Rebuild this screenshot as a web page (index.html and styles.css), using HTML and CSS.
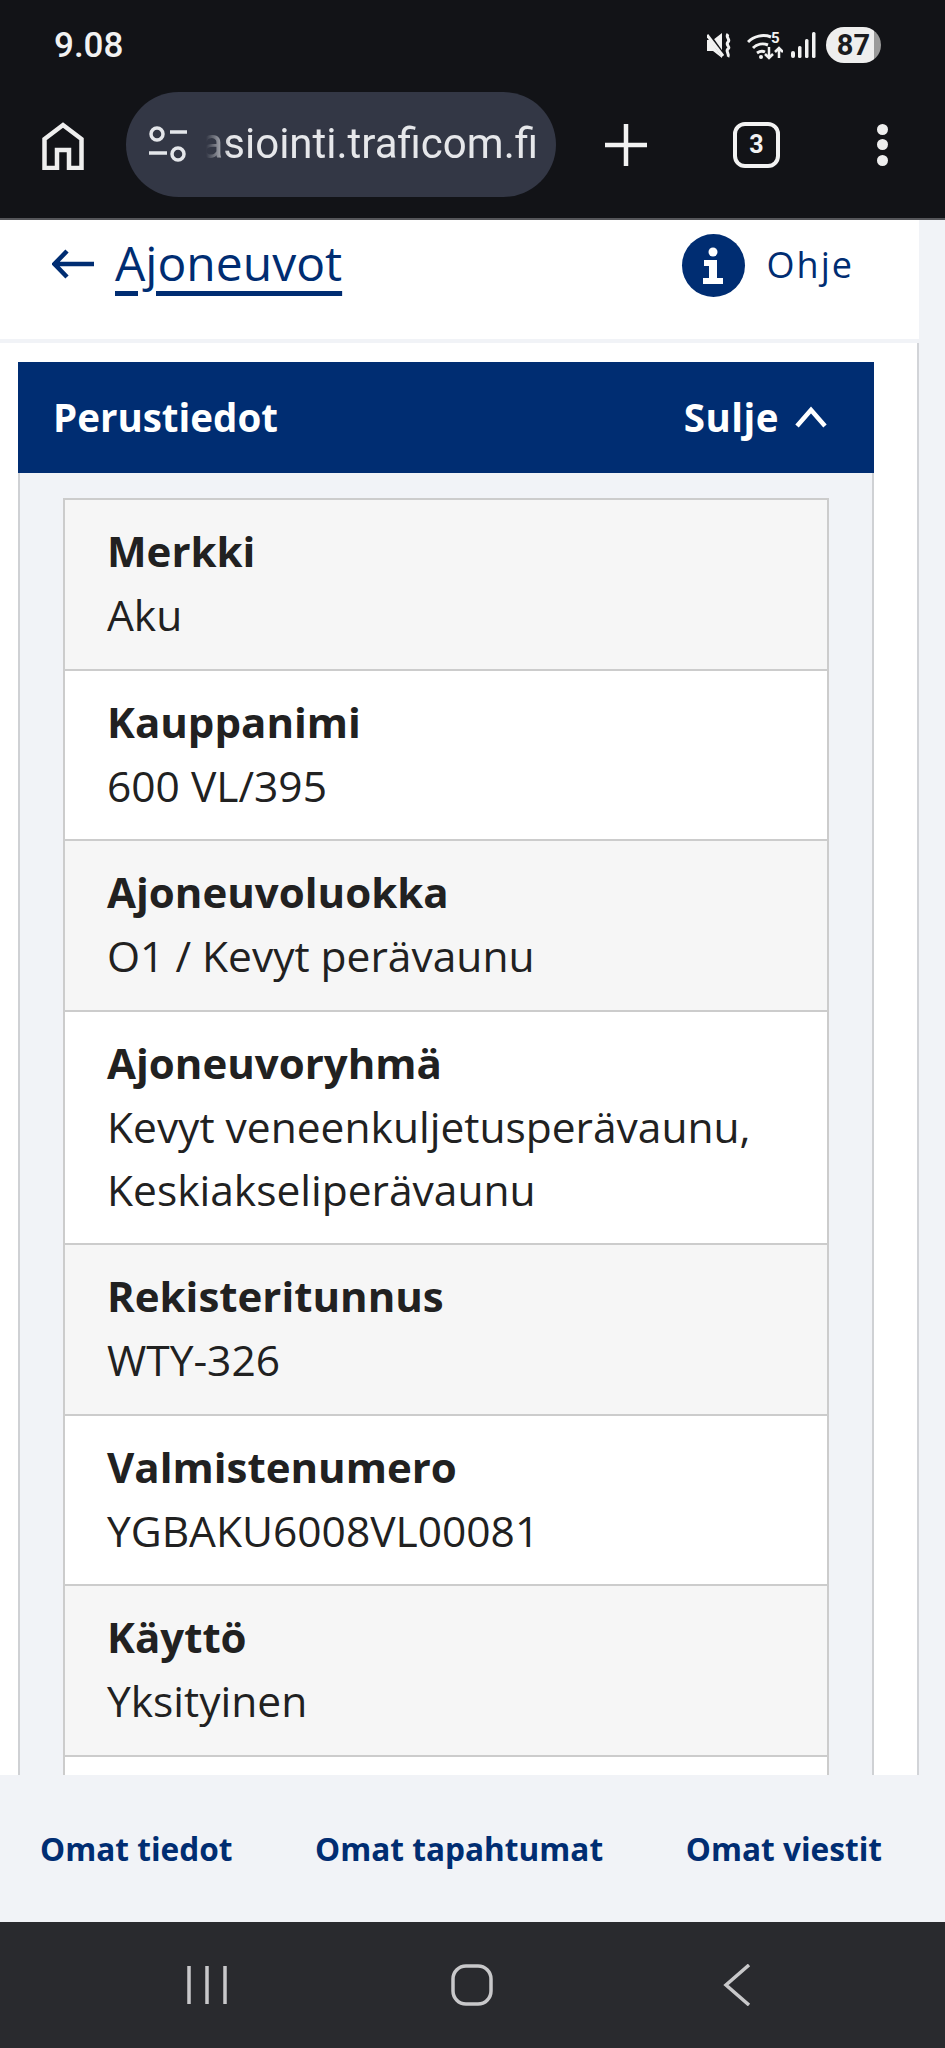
FILE: index.html
```html
<!DOCTYPE html>
<html lang="fi">
<head>
    <meta charset="UTF-8">
    <title>Ajoneuvot</title>
    <link rel="stylesheet" href="styles.css">
</head>
<body>
<div class="phone">
    <div class="chrome">
        <div class="status">
            <span class="clock">9.08</span>
            <div class="status-icons">
                <svg class="ic-mute" viewBox="0 0 26 25" width="26" height="25" fill="none">
                    <path d="M0 7h6L15 0V25L6 18H0z" fill="#f2f2f2"/>
                    <path d="M1 1l15 21" stroke="#121317" stroke-width="4"/>
                    <path d="M0 2l16 21" stroke="#f2f2f2" stroke-width="3"/>
                    <path d="M21 1c-3 4 3 5 0 8s3 5 0 7 2 5 0 8" stroke="#f2f2f2" stroke-width="3"/>
                </svg>
                <svg class="ic-wifi" viewBox="0 0 36 30" width="36" height="30" fill="none" stroke="#f2f2f2" stroke-width="3">
                    <path d="M1 12c6-6 15-8 23-5M6 18c4-4 10-5 15-3M10 23c3-2 6-2 8-1"/>
                    <circle cx="14" cy="27" r="2" fill="#f2f2f2" stroke="none"/>
                    <path d="M22 17v11M18 24l4 4 4-4M32 28V18M28 22l4-4 4 4" stroke-width="2.500"/>
                </svg>
                <span class="wifi-five">5</span>
                <svg class="ic-signal" viewBox="0 0 25 26" width="25" height="26" fill="#f2f2f2">
                    <rect x="0" y="19" width="4" height="7" rx="2"/>
                    <rect x="7" y="14" width="3.500" height="12" rx="1.500"/>
                    <rect x="14" y="7" width="3.500" height="19" rx="1.500"/>
                    <rect x="21" y="0" width="3.500" height="26" rx="1.500"/>
                </svg>
                <span class="battery">87</span>
            </div>
        </div>
        <div class="toolbar">
            <svg class="ic-home" viewBox="0 0 42 48" width="42" height="48" fill="none" stroke="#eeeeee" stroke-width="4.500">
                <path d="M2.500 46V17L21 3l18.500 14v29H27V28H15v18z"/>
            </svg>
            <div class="url-pill">
                <svg class="ic-tune" viewBox="0 0 40 36" width="40" height="36" fill="none" stroke="#e4e6ea" stroke-width="3.500">
                    <circle cx="9" cy="8" r="6"/>
                    <path d="M22 6h17M1 27h18"/>
                    <circle cx="30" cy="28" r="6"/>
                </svg>
                <div class="url-clip"><span class="url-text">asiointi.traficom.fi</span></div>
            </div>
            <svg class="ic-plus" viewBox="0 0 42 42" width="42" height="42" stroke="#f2f2f2" stroke-width="4.500">
                <path d="M21 0v42M0 21h42"/>
            </svg>
            <div class="tabs-count">3</div>
            <div class="menu-dots"><i></i><i></i><i></i></div>
        </div>
    </div>

    <div class="page">
        <div class="sheet">
            <div class="topbar">
                <a class="back" href="#">
                    <svg class="ic-back" viewBox="0 0 42 30" width="42" height="30" fill="none" stroke="#002d72" stroke-width="4.500">
                        <path d="M42 15H3M15 2L2.500 15 15 28"/>
                    </svg>
                    <span class="back-text">Ajoneuvot</span>
                </a>
                <a class="help" href="#">
                    <span class="help-circle">
                        <svg viewBox="0 0 24 38" width="24" height="38" fill="#ffffff">
                            <circle cx="12" cy="5" r="4.500"/>
                            <path d="M3 13h13v18h6v6H2v-6h6V19H3z"/>
                        </svg>
                    </span>
                    <span class="help-text">Ohje</span>
                </a>
            </div>
            <div class="gap"></div>
            <div class="card">
                <div class="card-head">
                    <span class="card-title">Perustiedot</span>
                    <span class="card-toggle">Sulje
                        <svg viewBox="0 0 32 22" width="32" height="22" fill="none" stroke="#ffffff" stroke-width="4.500">
                            <path d="M2 20L16 4l14 16"/>
                        </svg>
                    </span>
                </div>
                <div class="card-body">
                    <div class="rows">
                        <div class="row">
                            <div class="label">Merkki</div>
                            <div class="value">Aku</div>
                        </div>
                        <div class="row">
                            <div class="label">Kauppanimi</div>
                            <div class="value">600 VL/395</div>
                        </div>
                        <div class="row">
                            <div class="label">Ajoneuvoluokka</div>
                            <div class="value">O1 / Kevyt perävaunu</div>
                        </div>
                        <div class="row">
                            <div class="label">Ajoneuvoryhmä</div>
                            <div class="value">Kevyt veneenkuljetusperävaunu,<br>Keskiakseliperävaunu</div>
                        </div>
                        <div class="row">
                            <div class="label">Rekisteritunnus</div>
                            <div class="value">WTY-326</div>
                        </div>
                        <div class="row">
                            <div class="label">Valmistenumero</div>
                            <div class="value">YGBAKU6008VL00081</div>
                        </div>
                        <div class="row">
                            <div class="label">Käyttö</div>
                            <div class="value">Yksityinen</div>
                        </div>
                        <div class="row row-empty"></div>
                    </div>
                </div>
            </div>
        </div>
    </div>

    <div class="footer-links">
        <a href="#">Omat tiedot</a>
        <a href="#">Omat tapahtumat</a>
        <a href="#">Omat viestit</a>
    </div>

    <div class="navbar">
        <svg viewBox="0 0 40 40" width="40" height="40" stroke="#c8c8ca" stroke-width="3.500">
            <path d="M2 1v38M20 1v38M38 1v38"/>
        </svg>
        <svg viewBox="0 0 42 42" width="42" height="42" fill="none" stroke="#c8c8ca" stroke-width="3.500">
            <rect x="2" y="2" width="38" height="38" rx="13"/>
        </svg>
        <svg class="ic-nav-back" viewBox="0 0 28 42" width="28" height="42" fill="none" stroke="#c8c8ca" stroke-width="3.500">
            <path d="M26 1L3 21l23 20"/>
        </svg>
    </div>
</div>
</body>
</html>
```

FILE: styles.css
```css
* {
    box-sizing: border-box;
}

html, body {
    margin: 0;
    padding: 0;
    background: #f1f3f7;
}

a {
    text-decoration: none;
    color: #002d72;
}

.phone {
    width: 945px;
    height: 2048px;
    display: flex;
    flex-direction: column;
    overflow: hidden;
    font-family: "Open Sans", sans-serif;
}

/* browser chrome */
.chrome {
    height: 220px;
    flex: none;
    background: #121317;
    border-bottom: 2px solid #55565a;
    color: #f2f2f2;
}

.status {
    height: 92px;
    padding: 26px 64px 0 54px;
    display: flex;
    justify-content: space-between;
    align-items: flex-start;
}

.clock {
    font-family: Roboto, sans-serif;
    font-weight: 500;
    font-size: 35px;
    line-height: 38px;
    padding-top: 1px;
}

.status-icons {
    position: relative;
    display: flex;
    align-items: center;
    height: 38px;
}

.ic-mute {
    margin-right: 14px;
}

.wifi-five {
    position: absolute;
    left: 64px;
    top: 5px;
    font-family: Roboto, sans-serif;
    font-weight: 700;
    font-size: 15px;
    line-height: 15px;
}

.ic-signal {
    margin-left: 8px;
    margin-right: 10px;
}

.battery {
    width: 55px;
    height: 36px;
    border-radius: 18px;
    background: linear-gradient(to right, #eeeeee 88%, #9a9a9a 88%);
    color: #1a1b1f;
    font-family: Roboto, sans-serif;
    font-weight: 700;
    font-size: 29px;
    line-height: 36px;
    text-align: center;
}

.toolbar {
    height: 105px;
    padding-left: 42px;
    display: flex;
    align-items: center;
}

.ic-home {
    flex: none;
    margin-top: 3px;
}

.url-pill {
    width: 430px;
    height: 105px;
    margin-left: 42px;
    border-radius: 53px;
    background: #333745;
    display: flex;
    align-items: center;
    padding-left: 22px;
}

.ic-tune {
    flex: none;
    margin-top: -2px;
}

.url-clip {
    margin-left: 12px;
    width: 338px;
    height: 50px;
    margin-top: -1px;
    text-align: right;
    white-space: nowrap;
    overflow: hidden;
    -webkit-mask-image: linear-gradient(to right, transparent 6px, #000 30px);
    mask-image: linear-gradient(to right, transparent 6px, #000 30px);
    direction: rtl;
}

.url-text {
    direction: ltr;
    unicode-bidi: embed;
    font-family: Roboto, sans-serif;
    font-size: 42px;
    line-height: 50px;
    color: #e6e7ea;
}

.ic-plus {
    flex: none;
    margin-left: 49px;
}

.tabs-count {
    flex: none;
    width: 47px;
    height: 46px;
    margin-left: 86px;
    border: 4px solid #f2f2f2;
    border-radius: 12px;
    font-family: Roboto, sans-serif;
    font-weight: 700;
    font-size: 25px;
    line-height: 38px;
    text-align: center;
}

.menu-dots {
    flex: none;
    margin-left: 97px;
    height: 42px;
    display: flex;
    flex-direction: column;
    justify-content: space-between;
}

.menu-dots i {
    display: block;
    width: 11px;
    height: 11px;
    border-radius: 50%;
    background: #eeeeee;
}

/* page */
.page {
    flex: 1;
    min-height: 0;
    overflow: hidden;
    background: #f1f3f7;
}

.sheet {
    width: 919px;
}

.topbar {
    height: 119px;
    background: #fff;
    display: flex;
    justify-content: space-between;
    align-items: flex-start;
    padding: 14px 65px 0 52px;
}

.back {
    display: flex;
    align-items: center;
    height: 60px;
}

.back-text {
    margin-left: 21px;
    margin-top: -2px;
    font-size: 48px;
    line-height: 60px;
    text-decoration: underline;
    text-decoration-thickness: 5px;
    text-underline-offset: 10px;
}

.help {
    display: flex;
    align-items: center;
}

.help-circle {
    width: 63px;
    height: 63px;
    border-radius: 50%;
    background: #002d72;
    display: flex;
    align-items: center;
    justify-content: center;
}

.help-text {
    margin-left: 22px;
    margin-top: -2px;
    font-size: 36px;
    letter-spacing: 2px;
}

.gap {
    height: 4px;
}

.card {
    background: #fff;
    border-right: 2px solid #d2d4d8;
    padding: 19px 43px 0 18px;
}

.card-head {
    height: 111px;
    background: #002d72;
    color: #fff;
    font-weight: 700;
    font-size: 38.500px;
    display: flex;
    justify-content: space-between;
    align-items: center;
    padding: 0 47px 2px 35px;
}

.card-toggle {
    display: flex;
    align-items: center;
    gap: 16px;
    letter-spacing: 0.500px;
}

.card-body {
    background: #f1f3f7;
    border-left: 2px solid #cfd1d4;
    border-right: 2px solid #cfd1d4;
    padding: 25px 43px 0;
}

.rows {
    border: 2px solid #cccccc;
    border-bottom: 0;
}

.row {
    padding: 19px 42px 22.500px;
    border-bottom: 2px solid #cccccc;
    background: #fff;
    color: #212121;
    font-size: 42px;
    line-height: 63px;
}

.row:nth-child(odd) {
    background: #f6f6f6;
}

.label {
    font-weight: 700;
}

.value {
    font-weight: 400;
    font-size: 42.500px;
    margin-top: 1px;
}

.row-empty {
    height: 170px;
    background: #fff;
}

/* bottom */
.footer-links {
    height: 147px;
    flex: none;
    background: #f1f3f7;
    display: flex;
    justify-content: space-between;
    align-items: center;
    padding: 0 63px 0 40px;
}

.footer-links a {
    font-weight: 700;
    font-size: 31.600px;
}

.navbar {
    height: 126px;
    flex: none;
    background: #292a2e;
    display: flex;
    align-items: center;
    padding: 0 0 0 187px;
    gap: 224px;
}

.ic-nav-back {
    margin-left: 6px;
}
```
